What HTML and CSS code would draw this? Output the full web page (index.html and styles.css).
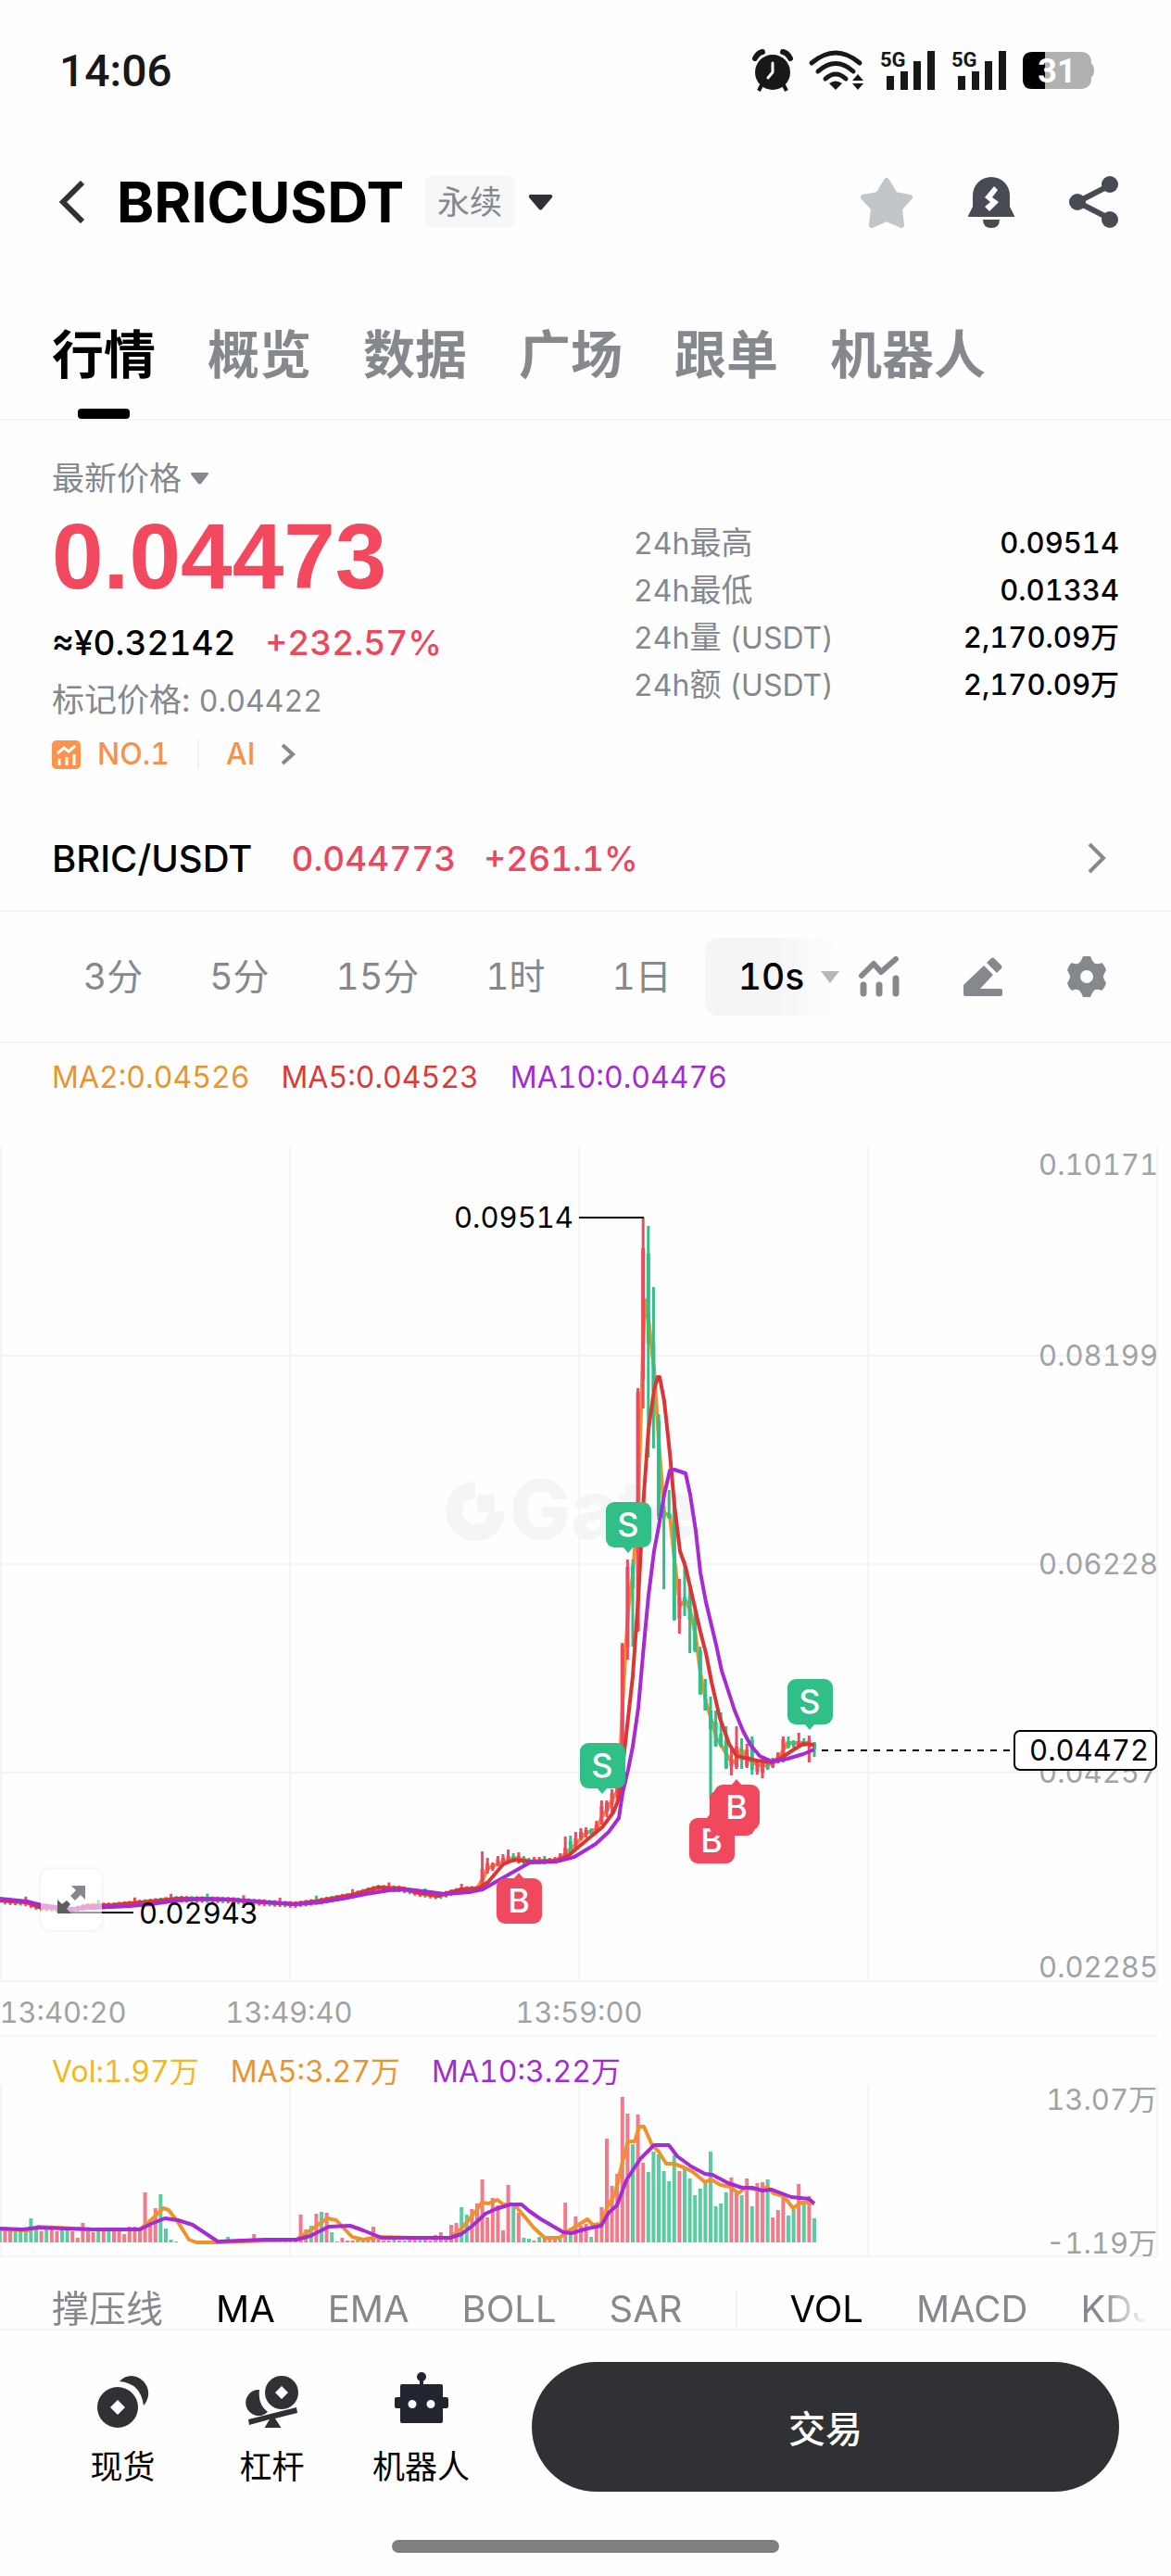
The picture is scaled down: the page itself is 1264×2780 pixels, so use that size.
FILE: index.html
```html
<!DOCTYPE html>
<html lang="zh-CN">
  <head>
    <meta charset="UTF-8" />
    <meta name="viewport" content="width=device-width, initial-scale=1.0" />
    <title>BRICUSDT 永续</title>
    <link rel="stylesheet" href="styles.css">
  </head>
  <body>
    <div class="statusbar">
      <span class="clock">14:06</span>
      <div class="status-icons">
        <svg width="44" height="45" viewBox="0 0 44 45">
          <circle cx="22" cy="24" r="19" fill="#181818" />
          <path d="M3 9Q6 3 11 2M33 2Q38 3 41 9" stroke="#181818" stroke-width="6" stroke-linecap="round" fill="none" />
          <path d="M10 38l-3 6M34 38l3 6" stroke="#181818" stroke-width="4" />
          <path d="M22 14v10l-5 6" stroke="#fff" stroke-width="3" stroke-linecap="round" fill="none" />
        </svg>
        <svg class="wifi" width="60" height="44" viewBox="0 0 60 44">
          <g fill="none" stroke="#181818" stroke-width="5" stroke-linecap="round">
            <path d="M3 14Q29 -8 55 14" />
            <path d="M10 23Q29 6 48 23" />
            <path d="M18 31Q29 21 40 31" />
          </g>
          <path d="M22 36Q29 31 36 36L29 43z" fill="#181818" />
          <path d="M47 33l6-7 6 7zM47 36h12l-6 7z" fill="#181818" />
        </svg>
        <svg class="signal" width="60" height="44" viewBox="0 0 60 44">
          <text class="net" x="0" y="18">5G</text>
          <path d="M7 28h8v15h-8zM22 23h8v20h-8zM36 12h8v31h-8zM51 1h8v42h-8z" fill="#181818" />
        </svg>
        <svg class="signal" width="60" height="44" viewBox="0 0 60 44">
          <text class="net" x="0" y="18">5G</text>
          <path d="M7 28h8v15h-8zM22 23h8v20h-8zM36 12h8v31h-8zM51 1h8v42h-8z" fill="#181818" />
        </svg>
        <svg width="78" height="40" viewBox="0 0 78 40">
          <path d="M70 12h3q4 2 4 8t-4 8h-3z" fill="#b1b1b1" />
          <rect width="74" height="40" rx="10" fill="#b1b1b1" />
          <path d="M24 0H10Q0 0 0 10v20q0 10 10 10h14z" fill="#000" />
          <text class="charge" x="37" y="33" text-anchor="middle">31</text>
        </svg>
      </div>
    </div>

    <header class="header">
      <a class="back" href="#" aria-label="返回">
        <svg width="30" height="46" viewBox="0 0 30 46"><path d="M27 2L6 23l21 21" fill="none" stroke="#303135" stroke-width="6" /></svg>
      </a>
      <h1>BRICUSDT</h1>
      <span class="badge">永续</span>
      <button class="icon-btn" aria-label="切换交易对">
        <svg width="27" height="18" viewBox="0 0 27 18"><path d="M2 1h23q2 1 1 3L15 17q-2 1-3 0L1 4Q0 2 2 1z" fill="#303135" /></svg>
      </button>
      <div class="header-actions">
        <button class="icon-btn" aria-label="收藏">
          <svg width="58" height="57" viewBox="0 0 58 57"><path d="M29 5l9 15 16 3-11 12 2 18-16-7-16 7 2-18L4 23l16-3z" fill="#c1c6ca" stroke="#c1c6ca" stroke-width="6" stroke-linejoin="round" /></svg>
        </button>
        <button class="icon-btn" aria-label="价格提醒">
          <svg width="50" height="57" viewBox="0 0 50 57">
            <path d="M5 21a20 20 0 0 1 40 0v12l5 10v1H0v-1l5-10z" fill="#494b54" />
            <path d="M16 47h18q0 9-9 9t-9-9z" fill="#494b54" />
            <path d="M28 11l4 4-6 8 7 5-10 10-5-5 6-5-6-5z" fill="#fff" />
          </svg>
        </button>
        <button class="icon-btn" aria-label="分享">
          <svg width="54" height="57" viewBox="0 0 54 57">
            <path d="M44 10L9 28l35 18" fill="none" stroke="#494b54" stroke-width="6" />
            <circle cx="9" cy="28" r="9" fill="#494b54" /><circle cx="44" cy="9" r="9" fill="#494b54" /><circle cx="44" cy="47" r="9" fill="#494b54" />
          </svg>
        </button>
      </div>
    </header>

    <nav class="tabs">
      <a class="active" href="#">行情</a>
      <a href="#">概览</a>
      <a href="#">数据</a>
      <a href="#">广场</a>
      <a href="#">跟单</a>
      <a href="#">机器人</a>
    </nav>

    <section class="ticker">
      <div class="ticker-left">
        <button class="price-type">最新价格
          <svg width="19" height="13" viewBox="0 0 19 13"><path d="M1 0h17q2 1 0 3l-7 9q-1 1-3 0L1 3Q-1 1 1 0z" fill="#85888c" /></svg>
        </button>
        <div class="last-price">0.04473</div>
        <div class="fiat"><span>≈¥0.32142</span><span class="up">+232.57%</span></div>
        <div class="mark">标记价格: <span class="num">0.04422</span></div>
        <a class="rank" href="#">
          <svg width="31" height="31" viewBox="0 0 31 31">
            <rect width="31" height="31" rx="5" fill="#fd934c" />
            <path d="M6 14l7-6 5 4 7-6M8 20v7M16 18v9M24 15v12" stroke="#fff" stroke-width="3" fill="none" />
          </svg>
          <span class="rank-no">NO.1</span>
          <span class="rank-tag">AI</span>
          <svg width="16" height="24" viewBox="0 0 16 24"><path d="M2 2l11 10L2 22" fill="none" stroke="#85888c" stroke-width="4" /></svg>
        </a>
      </div>
      <dl class="stats">
        <div><dt><span class="num">24h</span>最高</dt><dd>0.09514</dd></div>
        <div><dt><span class="num">24h</span>最低</dt><dd>0.01334</dd></div>
        <div><dt><span class="num">24h</span>量 <span class="num">(USDT)</span></dt><dd>2,170.09万</dd></div>
        <div><dt><span class="num">24h</span>额 <span class="num">(USDT)</span></dt><dd>2,170.09万</dd></div>
      </dl>
    </section>

    <a class="spot" href="#">
      <span class="spot-name">BRIC/USDT</span>
      <span class="up">0.044773</span>
      <span class="up">+261.1%</span>
      <svg width="20" height="34" viewBox="0 0 20 34"><path d="M2 2l15 15L2 32" fill="none" stroke="#85888c" stroke-width="4" /></svg>
    </a>

    <div class="toolbar">
      <div class="periods">
        <button>3分</button>
        <button>5分</button>
        <button>15分</button>
        <button>1时</button>
        <button>1日</button>
        <button class="active">10s
          <svg width="20" height="13" viewBox="0 0 20 13"><path d="M0 0h20L10 13z" fill="#b5b7ba" /></svg>
        </button>
      </div>
      <div class="tools">
        <button class="icon-btn" aria-label="指标">
          <svg width="44" height="44" viewBox="0 0 44 44" stroke="#85888c" fill="none" stroke-linecap="round">
            <path d="M3 21L16 8l8 9L40 3" stroke-width="6" stroke-linejoin="round" />
            <path d="M5 31v9M22 31v9M40 24v16" stroke-width="7" />
          </svg>
        </button>
        <button class="icon-btn" aria-label="画线">
          <svg width="43" height="42" viewBox="0 0 43 42" fill="#85888c">
            <path d="M22 9l10 10-14 15h22q2 0 2 2v4q0 2-2 2H2q-2 0-2-2V30z" />
            <path d="M25 6l5-5q2-1 3 0l8 8q1 2 0 3l-5 5z" />
          </svg>
        </button>
        <button class="icon-btn" aria-label="设置">
          <svg width="42" height="44" viewBox="0 0 42 44">
            <path fill="#85888c" fill-rule="evenodd" d="M17 0h8q3 8 6 8 2 1 6-1 3 2 5 8-3 5-3 7t3 7q-2 6-5 8-4-2-6-1-3 0-6 8h-8q-3-8-6-8-2-1-6 1-3-2-5-8 3-5 3-7t-3-7q2-6 5-8 4 2 6 1 3 0 6-8zM21 15a7 7 0 1 0 0 14 7 7 0 1 0 0-14z" />
          </svg>
        </button>
      </div>
    </div>

    <div class="legend">
      <span class="c-orange">MA2:0.04526</span>
      <span class="c-red">MA5:0.04523</span>
      <span class="c-purple">MA10:0.04476</span>
    </div>

    <div class="chart">
      <svg id="priceChart" viewBox="0 -38 1264 998">
        <g class="grid">
          <path d="M0 225H1249M0 450H1249M0 675H1249M0 900H1249M0 959H1249" />
          <path d="M1 0V900M313 0V900M625 0V900M937 0V900M1249 0V900" />
        </g>
        <g class="watermark">
          <path d="M513 370A23 23 0 1 0 536 393" />
          <rect x="515" y="375" width="19" height="19" />
          <text x="550" y="423">Gate</text>
        </g>
        <g class="axis">
          <text x="1250" y="30">0.10171</text>
          <text x="1250" y="236">0.08199</text>
          <text x="1250" y="461">0.06228</text>
          <text x="1250" y="686">0.04257</text>
          <text x="1250" y="896">0.02285</text>
        </g>
        <g class="times">
          <text x="68" y="945">13:40:20</text>
          <text x="312" y="945">13:49:40</text>
          <text x="625" y="945">13:59:00</text>
        </g>
        <polyline class="ma orange" id="ma2" />
        <g id="candles"></g>
        <polyline class="ma red" id="ma5" />
        <polyline class="ma purple" id="ma10" />
        <g class="extreme">
          <path d="M625 76H695M75 826H144" />
          <text x="490" y="87">0.09514</text>
          <text x="150" y="838">0.02943</text>
        </g>
        <path class="now-line" d="M887 651H1094" />
        <rect class="now-box" x="1095" y="630" width="153" height="42" rx="6" />
        <text class="now-text" x="1240" y="662">0.04472</text>
        <g id="marks"></g>
      </svg>
      <button class="expand" aria-label="全屏">
        <svg width="32" height="32" viewBox="0 0 32 32">
          <path d="M16 1h15v15l-5-5-6 6-5-5 6-6z" fill="#85888c" />
          <path d="M16 31H1V16l5 5 5-4 4 4-4 5z" fill="#5c5d60" />
        </svg>
      </button>
    </div>

    <div class="legend legend-vol">
      <span class="c-yellow">Vol:1.97万</span>
      <span class="c-orange">MA5:3.27万</span>
      <span class="c-purple">MA10:3.22万</span>
    </div>

    <svg id="volumeChart" viewBox="0 0 1264 188">
      <path class="grid" d="M1 0V185M313 0V185M625 0V185M937 0V185M1249 0V185M0 185H1249" />
      <g id="bars"></g>
      <polyline class="ma orange" id="vol5" />
      <polyline class="ma purple" id="vol10" />
      <g class="axis">
        <text x="1249" y="27">13.07万</text>
        <text x="1249" y="182">-1.19万</text>
      </g>
    </svg>

    <div class="indicators">
      <button>撑压线</button>
      <button class="active">MA</button>
      <button>EMA</button>
      <button>BOLL</button>
      <button>SAR</button>
      <i class="sep"></i>
      <button class="active">VOL</button>
      <button>MACD</button>
      <button>KDJ</button>
    </div>

    <footer class="footer">
      <div class="actions">
        <a href="#">
          <svg width="60" height="60" viewBox="0 0 60 60" fill="#303135">
            <path fill-rule="evenodd" d="M24 16a22 22 0 1 0 0 44 22 22 0 1 0 0-44zM24 30l8 8-8 8-8-8z" />
            <path d="M26 10Q31 4 39 4a19 19 0 0 1 13 32Q49 12 26 10z" />
          </svg>
          现货
        </a>
        <a href="#">
          <svg width="60" height="60" viewBox="0 0 60 60" fill="#303135">
            <path fill-rule="evenodd" d="M40 4a18 18 0 1 0 0 36 18 18 0 1 0 0-36zM40 15l7 7-7 7-7-7z" />
            <path d="M16 19a14 14 0 1 0 9 24Q14 35 16 19z" />
            <path d="M4 51l52-13 1 6-24 6 7 11H21l6-10L5 57z" />
          </svg>
          杠杆
        </a>
        <a href="#">
          <svg width="60" height="60" viewBox="0 0 60 60" fill="#222430">
            <circle cx="30" cy="5" r="5" />
            <path fill-rule="evenodd" d="M28 5h4v8h19q2 0 2 2v12h4q2 0 2 2v8q0 2-2 2h-4v14q0 2-2 2H9q-2 0-2-2V39H3q-2 0-2-2v-8q0-2 2-2h4V15q0-2 2-2h19zM20 30a4 4 0 1 0 0 9 4 4 0 1 0 0-9zM40 30a4 4 0 1 0 0 9 4 4 0 1 0 0-9z" />
          </svg>
          机器人
        </a>
      </div>
      <button class="trade">交易</button>
    </footer>
    <div class="home-bar"></div>

    <script src="chart.js"></script>
  </body>
</html>
```
FILE: styles.css
```css
* {
  box-sizing: border-box;
}

body {
  margin: 0;
  background-color: #fefefe;
  color: #000;
  font-family: Inter, "Noto Sans CJK SC", sans-serif;
  font-size: 32px;
  font-variant-numeric: tabular-nums;
}

a {
  color: inherit;
  text-decoration: none;
}

button {
  background: none;
  border: none;
  padding: 0;
  color: inherit;
  font: inherit;
  font-variant-numeric: inherit;
  cursor: pointer;
}

svg {
  display: block;
  flex-shrink: 0;
}

.icon-btn {
  display: flex;
}

.up {
  color: #e8495f;
}

.num {
  font-size: 32px;
}

/* status bar */
.statusbar {
  display: flex;
  justify-content: space-between;
  align-items: center;
  height: 152px;
  padding: 0 82px 0 64px;
}

.clock {
  font-family: Roboto, sans-serif;
  font-size: 48px;
  font-weight: 500;
  color: #181818;
}

.status-icons {
  display: flex;
  align-items: center;
  gap: 17px;
}

.status-icons svg {
  overflow: visible;
}

.net {
  font-family: Roboto, sans-serif;
  font-size: 22px;
  font-weight: 700;
  fill: #181818;
}

.charge {
  font-family: Roboto, sans-serif;
  font-size: 36px;
  font-weight: 700;
  fill: #fff;
}

/* header */
.header {
  display: flex;
  align-items: center;
  height: 132px;
  padding: 0 56px 0 62px;
}

.header h1 {
  margin: 0 22px 0 34px;
  font-size: 61px;
  font-weight: 700;
  line-height: 72px;
}

.badge {
  margin-right: 14px;
  padding: 0 14px;
  border-radius: 8px;
  background-color: #f5f7f9;
  color: #85888c;
  font-size: 35px;
  line-height: 56px;
}

.header-actions {
  display: flex;
  gap: 59px;
  margin-left: auto;
}

/* tabs */
.tabs {
  display: flex;
  gap: 56px;
  padding: 64px 56px 0;
  border-bottom: 2px solid #f2f3f4;
  color: #85888c;
  font-size: 56px;
  font-weight: 600;
  line-height: 70px;
}

.tabs a {
  height: 104px;
}

.tabs .active {
  color: #000;
}

.tabs .active::after {
  content: "";
  display: block;
  width: 56px;
  height: 11px;
  margin: 23px auto 0;
  border-radius: 4px;
  background-color: #000;
}

/* ticker */
.ticker {
  display: flex;
  justify-content: space-between;
  height: 416px;
  padding: 38px 56px 0;
}

.ticker-left {
  display: flex;
  flex-direction: column;
  align-items: flex-start;
}

.price-type {
  display: flex;
  align-items: center;
  gap: 10px;
  color: #85888c;
  font-size: 35px;
  line-height: 48px;
}

.last-price {
  margin-top: 8px;
  color: #f2495e;
  font-family: "Liberation Sans", sans-serif;
  font-size: 100px;
  font-weight: 700;
  line-height: 104px;
}

.fiat {
  display: flex;
  gap: 32px;
  margin-top: 14px;
  font-size: 37px;
  font-weight: 500;
  line-height: 56px;
}

.mark {
  margin-top: 9px;
  color: #85888c;
  font-size: 35px;
  line-height: 48px;
}

.rank {
  display: flex;
  align-items: center;
  margin-top: 9px;
  color: #f5924c;
  font-weight: 500;
  line-height: 48px;
}

.rank-no {
  margin: 0 30px 0 18px;
}

.rank-tag {
  margin-right: 28px;
  padding-left: 29px;
  border-left: 2px solid #f0f1f2;
  line-height: 32px;
}

.stats {
  width: 524px;
  margin: 68px 0 0;
}

.stats div {
  display: flex;
  justify-content: space-between;
  height: 51px;
  line-height: 51px;
}

.stats dt {
  color: #85888c;
  font-size: 34px;
}

.stats dd {
  margin: 0;
  font-size: 31px;
  font-weight: 500;
}

.spot {
  display: flex;
  align-items: center;
  gap: 30px;
  height: 114px;
  padding: 0 70px 0 56px;
  border-bottom: 2px solid #f2f3f4;
  font-size: 37px;
  font-weight: 500;
}

.spot-name {
  margin-right: 12px;
  font-size: 40px;
}

.spot svg {
  margin-left: auto;
}

/* periods and tools */
.toolbar {
  display: flex;
  justify-content: space-between;
  align-items: center;
  height: 142px;
  padding: 0 70px 0 90px;
  border-bottom: 2px solid #f2f3f4;
}

.periods {
  display: flex;
  align-items: center;
  gap: 72px;
  color: #85888c;
  font-size: 39px;
  line-height: 44px;
}

.periods .active {
  display: flex;
  align-items: center;
  gap: 18px;
  height: 84px;
  margin-left: -36px;
  padding-left: 36px;
  border-radius: 14px 0 0 14px;
  background: linear-gradient(to right, #f4f5f6 50%, #fefefe);
  color: #000;
  font-weight: 500;
}

.tools {
  display: flex;
  align-items: center;
  gap: 69px;
}

/* legends */
.legend {
  display: flex;
  gap: 34px;
  padding: 0 56px;
  line-height: 74px;
}

.legend-vol {
  padding-top: 24px;
  line-height: 28px;
}

.c-yellow {
  color: #f3b81c;
}

.c-orange {
  color: #e8952f;
}

.c-red {
  color: #d93a3a;
}

.c-purple {
  color: #a42bd0;
}

/* charts */
.chart {
  position: relative;
}

#priceChart,
#volumeChart {
  width: 100%;
  height: auto;
  font-size: 31px;
}

.grid {
  fill: none;
  stroke: #f3f4f5;
  stroke-width: 2;
}

.watermark {
  fill: #f3f5f6;
  font-size: 88px;
  font-weight: 800;
}

.watermark path {
  fill: none;
  stroke: #f3f5f6;
  stroke-width: 18;
}

.axis {
  fill: #a0a3a6;
  text-anchor: end;
}

.times {
  fill: #a0a3a6;
  text-anchor: middle;
}

.ma {
  fill: none;
  stroke-width: 4;
  stroke-linejoin: round;
}

.orange {
  stroke: #f0922b;
}

.red {
  stroke: #dc3535;
}

.purple {
  stroke: #a62bd3;
}

.extreme path {
  stroke: #000;
  stroke-width: 2;
}

.now-line {
  stroke: #000;
  stroke-width: 2;
  stroke-dasharray: 7 7;
}

.now-box {
  fill: #fff;
  stroke: #000;
  stroke-width: 2;
}

.now-text {
  text-anchor: end;
}

.mark-text {
  fill: #fff;
  font-size: 36px;
  font-weight: 500;
  text-anchor: middle;
}

.expand {
  position: absolute;
  left: 44px;
  bottom: 115px;
  display: flex;
  align-items: center;
  justify-content: center;
  width: 66px;
  height: 66px;
  border-radius: 10px;
  background-color: rgba(255, 255, 255, 0.6);
  box-shadow: 0 0 4px rgba(0, 0, 0, 0.1);
}

/* indicators */
.indicators {
  display: flex;
  align-items: center;
  gap: 57px;
  height: 75px;
  padding: 33px 34px 0 56px;
  overflow: hidden;
  color: #85888c;
  font-size: 40px;
  line-height: 42px;
  white-space: nowrap;
  -webkit-mask-image: linear-gradient(to right, #000 94%, transparent 98%);
  mask-image: linear-gradient(to right, #000 94%, transparent 98%);
}

.indicators .active {
  color: #000;
}

.sep {
  flex-shrink: 0;
  width: 2px;
  height: 40px;
  background-color: #eff0f1;
}

/* footer */
.footer {
  display: flex;
  gap: 39px;
  padding: 34px 56px 0 52px;
  border-top: 2px solid #f0f2f3;
}

.actions {
  display: grid;
  grid-template-columns: repeat(3, 161px);
}

.actions a {
  display: flex;
  flex-direction: column;
  align-items: center;
  gap: 18px;
  padding-top: 11px;
  font-size: 35px;
  line-height: 48px;
}

.trade {
  flex: 1;
  height: 140px;
  border-radius: 70px;
  background-color: #303135;
  color: #fff;
  font-size: 40px;
  font-weight: 500;
}

.home-bar {
  width: 33%;
  height: 14px;
  margin: 52px auto 25px;
  border-radius: 7px;
  background-color: #808080;
}
```
FILE: chart.js
```js
const UP = "#f0495d";
const DOWN = "#2fbf87";
const STEP = 5.6;
const LAST_X = 879;

// Quiet stretch before the pump: [x, y] of the price
const quiet = [
  [0, 813], [29, 815], [41, 820], [78, 823], [94, 819], [122, 818], [163, 814],
  [192, 811], [245, 812], [286, 815], [318, 817], [347, 813], [380, 807],
  [408, 799], [433, 800], [453, 805], [473, 808], [498, 801], [515, 800],
];

// [direction, high, body top, body bottom, low]
const candles = [
  ["r", 760, 779, 796, 798], ["r", 767, 773, 781, 784], ["r", 772, 773, 779, 781],
  ["r", 765, 769, 774, 776], ["r", 763, 767, 772, 774], ["r", 758, 765, 770, 772],
  ["g", 762, 765, 770, 772], ["r", 761, 765, 771, 773], ["g", 765, 767, 771, 774],
  ["g", 767, 769, 772, 774], ["r", 766, 768, 772, 773], ["r", 766, 769, 772, 774],
  ["g", 765, 768, 772, 774], ["r", 767, 769, 771, 773], ["r", 766, 768, 771, 773],
  ["r", 762, 765, 769, 772], ["r", 744, 756, 765, 766], ["g", 743, 749, 759, 764],
  ["r", 739, 746, 753, 758], ["r", 735, 739, 745, 748], ["r", 734, 737, 742, 745],
  ["g", 735, 737, 741, 742], ["r", 727, 731, 737, 738], ["r", 705, 711, 728, 731],
  ["r", 705, 707, 717, 723], ["r", 693, 697, 710, 718], ["r", 678, 686, 697, 706],
  ["r", 535, 537, 689, 692], ["r", 445, 453, 540, 553], ["g", 445, 452, 476, 539],
  ["r", 260, 264, 522, 523], ["r", 76, 109, 251, 282], ["g", 85, 115, 212, 335],
  ["g", 151, 212, 263, 325], ["g", 288, 295, 398, 402], ["g", 387, 396, 400, 477],
  ["g", 370, 396, 400, 401], ["g", 376, 383, 510, 511], ["r", 466, 486, 509, 525],
  ["g", 446, 486, 491, 506], ["g", 476, 484, 510, 546], ["g", 494, 508, 543, 545],
  ["g", 539, 543, 590, 591], ["g", 574, 590, 608, 608], ["g", 593, 608, 628, 703],
  ["g", 608, 620, 646, 647], ["g", 610, 633, 646, 648], ["g", 625, 640, 670, 671],
  ["r", 650, 661, 668, 678], ["r", 625, 647, 669, 671], ["g", 638, 655, 662, 671],
  ["r", 644, 650, 668, 670], ["g", 636, 640, 672, 677], ["r", 661, 664, 674, 677],
  ["r", 660, 662, 675, 681], ["g", 659, 661, 671, 672], ["r", 659, 661, 669, 670],
  ["r", 653, 655, 664, 665], ["r", 636, 639, 663, 664], ["g", 636, 641, 647, 649],
  ["g", 640, 642, 646, 648], ["r", 632, 641, 646, 648], ["g", 638, 641, 645, 647],
  ["r", 635, 640, 646, 664], ["g", 642, 643, 650, 658],
];

const ma2 = "521,790 527,778 555,767 573,771 600,770 611,762 622,752 633,740 644,736 650,722 656,714 662,702 668,692 672,600 678,500 683,462 689,380 695,190 698,165 700,185 706,240 712,330 717,395 723,397 728,445 734,495 740,489 745,500 751,528 756,567 762,599 768,618 773,637 779,646 787,660 793,664 800,650 812,664 823,668 834,665 843,655 850,643 860,643 870,643 879,646";
const ma5 = "515,801 527,793 543,774 555,769 573,771 600,770 613,765 633,748 650,734 662,718 668,703 672,669 678,616 683,571 689,487 695,375 700,305 706,262 710,248 712,248 717,274 723,330 728,386 734,436 740,453 751,501 756,523 762,546 768,577 777,616 787,644 795,657 817,662 834,664 845,658 857,650 867,644 879,645";
const ma10 = "0,811 29,814 45,818 78,822 98,821 140,819 163,817 190,813 220,811 250,812 290,815 320,817 345,815 370,811 395,806 420,802 440,801 465,804 480,806 507,804 521,801 572,772 600,771 620,766 643,752 657,739 668,724 672,697 678,672 683,647 689,605 695,537 700,484 706,436 712,404 717,375 723,349 728,348 740,352 745,375 751,414 756,459 762,491 773,537 779,565 793,608 802,630 810,645 820,657 833,663 850,660 867,655 879,650";

const volumes = "g13 r13 r12 g13 g12 g13 g26 g14 r12 g14 r16 r12 g14 g13 r12 r5 r21 r12 r11 g12 r12 g13 r12 r13 r9 r17 r17 r15 r54 r25 r37 g52 g15 g3 g1 g0 g0 g0 g0 g0 g0 g0 g0 g0 g6 r1 g1 r1 r1 r9 r2 g2 r2 g1 g2 r2 r1 r2 r30 r14 g18 r31 g33 r32 g11 g1 r5 r2 r2 g4 r3 r4 r17 r5 r2 r2 g3 r2 g2 r4 r5 g7 r3 r2 r8 r11 r7 r19 r21 g38 g30 r36 r42 r68 r27 r48 r40 r13 r62 g39 r32 g5 g4 r2 g6 r5 r4 r6 g5 r43 g9 r28 r18 r20 g6 r17 r38 r112 r61 r74 r157 r139 g106 r138 r86 g76 g98 g95 g77 g66 g94 r77 g82 g69 g51 g58 g66 g98 g39 g42 g54 r70 r56 g51 r69 g39 r64 r65 g68 r27 r35 r50 g29 g36 r63 g41 r50 g26".split(" ");
const vol5 = "0,156 31,157 41,153 61,154 98,156 151,156 163,146 176,133 182,135 192,148 204,167 212,170 235,170 320,167 335,157 353,144 363,146 380,164 392,167 408,164 445,165 486,165 498,155 514,136 520,127 527,128 537,124 543,129 555,129 567,143 576,154 588,165 604,165 613,158 634,145 640,151 649,150 655,133 664,117 672,83 678,61 685,61 690,45 695,45 704,65 711,72 719,85 727,85 738,89 748,94 761,105 767,102 778,108 788,110 797,117 805,111 823,114 828,110 835,117 846,120 856,133 865,127 873,127 879,128";
const vol10 = "0,155 24,156 41,154 102,156 151,156 163,150 178,144 192,146 208,151 220,159 235,169 286,167 320,167 335,163 355,153 378,152 392,157 412,165 449,165 486,165 498,161 510,152 524,139 535,134 551,129 563,129 571,136 584,145 596,152 608,159 617,160 634,155 649,152 657,138 666,130 676,103 691,80 706,65 722,65 731,77 746,88 761,96 769,97 786,106 801,111 812,111 823,114 833,113 854,121 873,123 879,128";

// [letter, center x, box top]
const marks = [
  ["S", 678, 383], ["S", 650, 643], ["S", 874, 574],
  ["B", 560, 789], ["B", 768, 724], ["B", 790, 694], ["B", 795, 688],
];

function quietAt(x) {
  const i = Math.max(1, quiet.findIndex((p) => p[0] >= x));
  const [x0, y0] = quiet[i - 1];
  const [x1, y1] = quiet[i];
  return y0 + ((y1 - y0) * (x - x0)) / (x1 - x0);
}

function candle(x, [dir, high, top, bottom, low]) {
  const color = dir === "r" ? UP : DOWN;
  return `<path d="M${x} ${high}V${low}" stroke="${color}" stroke-width="3"/>
    <rect x="${x - 2}" y="${top}" width="4" height="${Math.max(2, bottom - top)}" fill="${color}"/>`;
}

function drawCandles() {
  const firstX = LAST_X - (candles.length - 1) * STEP;
  let html = "";
  let n = 0;
  for (let x = firstX - STEP; x > 0; x -= STEP) {
    const y = quietAt(x);
    const wick = n % 7 === 3 ? 6 : 3;
    html += candle(x, [n % 3 === 1 ? "g" : "r", y - wick, y - 2, y + 2, y + 4]);
    n++;
  }
  candles.forEach((c, i) => {
    html += candle(firstX + i * STEP, c);
  });
  document.querySelector("#candles").innerHTML = html;
}

function drawVolumes() {
  document.querySelector("#bars").innerHTML = volumes
    .map((v, i) => {
      const h = Number(v.slice(1));
      const x = LAST_X - (volumes.length - 1 - i) * STEP;
      const color = v[0] === "r" ? "#f27a89" : "#5ccba2";
      return `<rect x="${x - 2}" y="${170 - h}" width="4" height="${h}" fill="${color}"/>`;
    })
    .join("");
}

function drawMarks() {
  document.querySelector("#marks").innerHTML = marks
    .map(([letter, x, y]) => {
      const sell = letter === "S";
      const tip = sell ? `M${x - 6} ${y + 48}l6 7 6-7z` : `M${x - 6} ${y + 1}l6-7 6 7z`;
      return `<g fill="${sell ? DOWN : UP}">
        <rect x="${x - 24}" y="${y}" width="49" height="49" rx="9"/><path d="${tip}"/>
        <text class="mark-text" x="${x}" y="${y + 37}">${letter}</text></g>`;
    })
    .join("");
}

const quietLine = quiet.map((p) => p.join(",")).join(" ");
const lines = {
  ma2: quietLine + " " + ma2,
  ma5: quietLine + " " + ma5,
  ma10,
  vol5,
  vol10,
};
Object.keys(lines).forEach((id) => {
  document.getElementById(id).setAttribute("points", lines[id]);
});

drawCandles();
drawVolumes();
drawMarks();
```
